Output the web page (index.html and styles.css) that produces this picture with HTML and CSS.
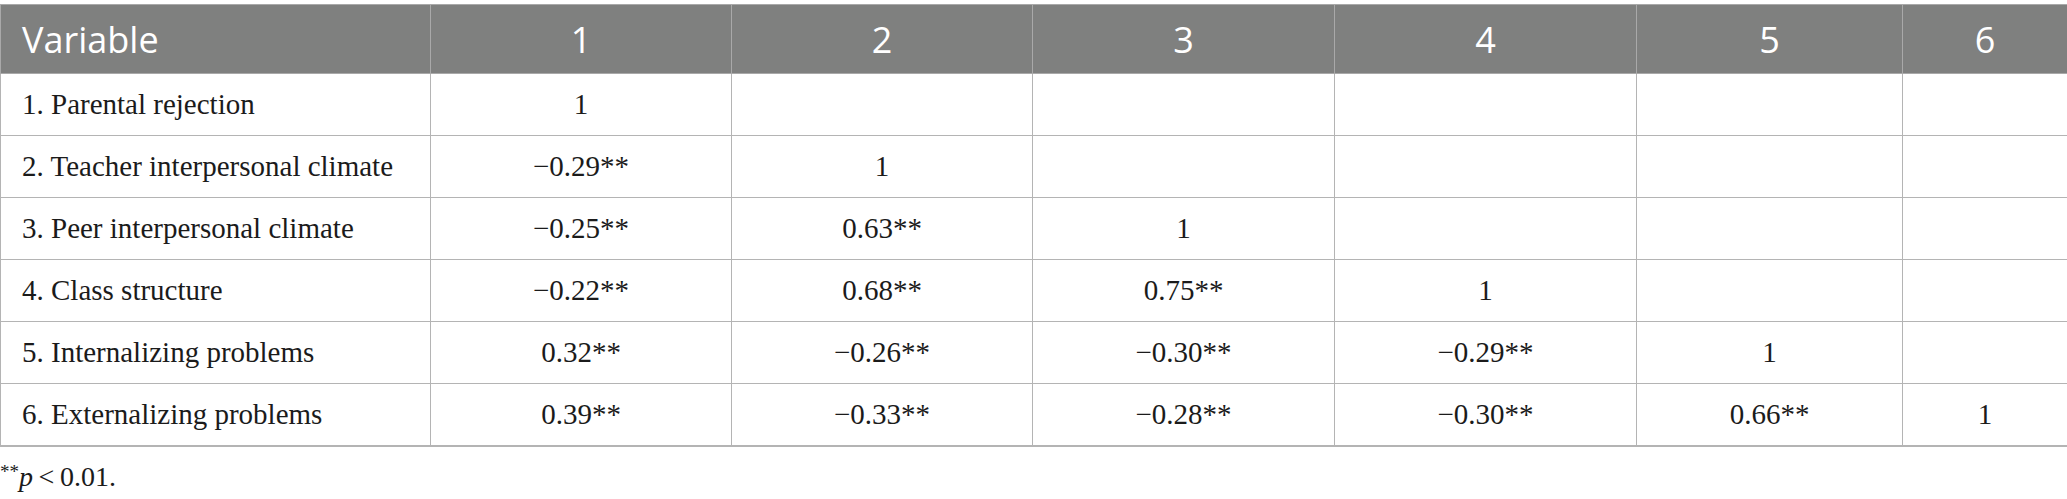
FILE: index.html
```html
<!DOCTYPE html>
<html lang="en">
<head>
<meta charset="utf-8">
<title>Correlation table</title>
<link rel="stylesheet" href="styles.css">
</head>
<body>
<div class="wrap">
<table class="corr">
  <colgroup>
    <col class="c-var">
    <col class="c-1">
    <col class="c-2">
    <col class="c-3">
    <col class="c-4">
    <col class="c-5">
    <col class="c-6">
  </colgroup>
  <thead>
    <tr>
      <th class="left">Variable</th>
      <th>1</th>
      <th>2</th>
      <th>3</th>
      <th>4</th>
      <th>5</th>
      <th>6</th>
    </tr>
  </thead>
  <tbody>
    <tr>
      <td class="left">1. Parental rejection</td>
      <td>1</td><td></td><td></td><td></td><td></td><td></td>
    </tr>
    <tr>
      <td class="left">2. Teacher interpersonal climate</td>
      <td>−0.29**</td><td>1</td><td></td><td></td><td></td><td></td>
    </tr>
    <tr>
      <td class="left">3. Peer interpersonal climate</td>
      <td>−0.25**</td><td>0.63**</td><td>1</td><td></td><td></td><td></td>
    </tr>
    <tr>
      <td class="left">4. Class structure</td>
      <td>−0.22**</td><td>0.68**</td><td>0.75**</td><td>1</td><td></td><td></td>
    </tr>
    <tr>
      <td class="left">5. Internalizing problems</td>
      <td>0.32**</td><td>−0.26**</td><td>−0.30**</td><td>−0.29**</td><td>1</td><td></td>
    </tr>
    <tr>
      <td class="left">6. Externalizing problems</td>
      <td>0.39**</td><td>−0.33**</td><td>−0.28**</td><td>−0.30**</td><td>0.66**</td><td>1</td>
    </tr>
  </tbody>
</table>
<p class="note"><span class="sup">**</span><i>p</i>&#8201;&lt;&#8201;0.01.</p>
</div>
</body>
</html>
```
FILE: styles.css
```css
html, body {
  margin: 0;
  padding: 0;
  background: #ffffff;
}

.wrap {
  padding-top: 4px;
}

.corr {
  width: 2067px;
  border-collapse: collapse;
  table-layout: fixed;
  border: 1px solid #b4b4b4;
  border-bottom: 2px solid #b4b4b4;
}

.c-var { width: 430px; }
.c-1 { width: 301px; }
.c-2 { width: 301px; }
.c-3 { width: 302px; }
.c-4 { width: 302px; }
.c-5 { width: 266px; }
.c-6 { width: 165px; }

.corr th {
  height: 68px;
  padding: 0;
  background: #7f807f;
  color: #ffffff;
  font-family: "Open Sans", "Noto Sans", sans-serif;
  font-weight: 400;
  font-size: 36px;
  text-align: center;
  vertical-align: middle;
  border: 1px solid #a9a9a9;
}

.corr td {
  height: 61px;
  padding: 0;
  color: #1b1b1b;
  font-family: "Liberation Serif", "Times New Roman", serif;
  font-size: 29px;
  text-align: center;
  vertical-align: middle;
  border: 1px solid #b4b4b4;
}

.corr .left {
  text-align: left;
  padding-left: 21px;
}

.note {
  margin: 14px 0 0 0;
  font-family: "Liberation Serif", "Times New Roman", serif;
  font-size: 28px;
  color: #1b1b1b;
}

.note .sup {
  font-size: 19px;
  vertical-align: 8px;
}
```
